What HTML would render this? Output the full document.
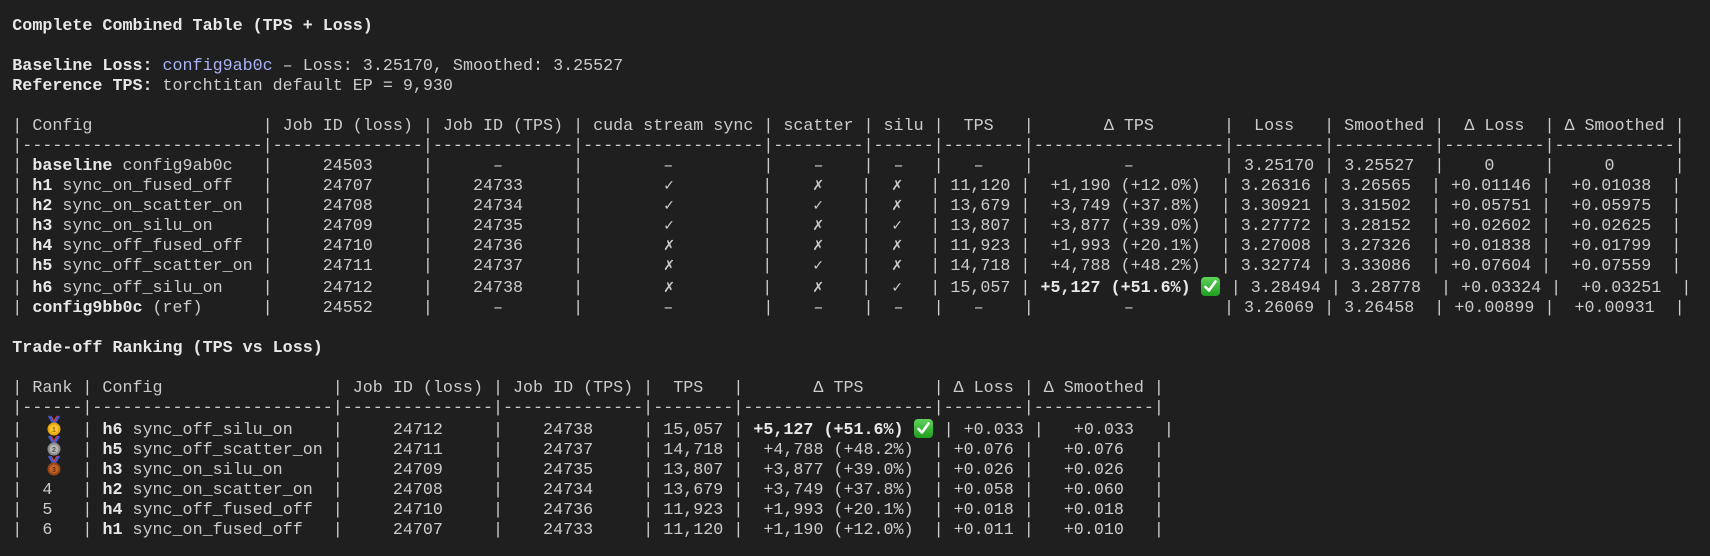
<!DOCTYPE html>
<html><head><meta charset="utf-8">
<style>
html,body{margin:0;padding:0;background:#1f1f1f;}
body{width:1710px;height:556px;overflow:hidden;position:relative;}
pre{margin:0;position:absolute;left:12.3px;top:16.7px;font-family:"Liberation Mono","DejaVu Sans Mono",monospace;font-size:16.7px;line-height:20px;color:#cccccc;white-space:pre;}
b{font-weight:bold;color:#e8e8e8;}
.l{color:#a9b3f5;}
i{font-style:normal;display:inline-block;width:1ch;text-align:center;font-family:"DejaVu Sans",sans-serif;font-size:14px;line-height:1;}
.ok{display:inline-block;width:2ch;height:20px;vertical-align:-5px;position:relative;}
.ok span{position:absolute;left:0;top:0;width:19px;height:19px;border-radius:4px;background:linear-gradient(#5fd35a,#1f9e1f);}
.ok svg{position:absolute;left:2px;top:2px;}
.m{position:absolute;}
</style></head><body>
<pre><b>Complete Combined Table (TPS + Loss)</b>

<b>Baseline Loss:</b> <span class="l">config9ab0c</span> – Loss: 3.25170, Smoothed: 3.25527
<b>Reference TPS:</b> torchtitan default EP = 9,930

| Config                 | Job ID (loss) | Job ID (TPS) | cuda stream sync | scatter | silu |  TPS   |       Δ TPS       |  Loss   | Smoothed |  Δ Loss  | Δ Smoothed |
|------------------------|---------------|--------------|------------------|---------|------|--------|-------------------|---------|----------|----------|------------|
| <b>baseline</b> config9ab0c   |     24503     |      –       |        –         |    –    |  –   |   –    |         –         | 3.25170 | 3.25527  |    0     |     0      |
| <b>h1</b> sync_on_fused_off   |     24707     |    24733     |        <i>✓</i>         |    <i>✗</i>    |  <i>✗</i>   | 11,120 |  +1,190 (+12.0%)  | 3.26316 | 3.26565  | +0.01146 |  +0.01038  |
| <b>h2</b> sync_on_scatter_on  |     24708     |    24734     |        <i>✓</i>         |    <i>✓</i>    |  <i>✗</i>   | 13,679 |  +3,749 (+37.8%)  | 3.30921 | 3.31502  | +0.05751 |  +0.05975  |
| <b>h3</b> sync_on_silu_on     |     24709     |    24735     |        <i>✓</i>         |    <i>✗</i>    |  <i>✓</i>   | 13,807 |  +3,877 (+39.0%)  | 3.27772 | 3.28152  | +0.02602 |  +0.02625  |
| <b>h4</b> sync_off_fused_off  |     24710     |    24736     |        <i>✗</i>         |    <i>✗</i>    |  <i>✗</i>   | 11,923 |  +1,993 (+20.1%)  | 3.27008 | 3.27326  | +0.01838 |  +0.01799  |
| <b>h5</b> sync_off_scatter_on |     24711     |    24737     |        <i>✗</i>         |    <i>✓</i>    |  <i>✗</i>   | 14,718 |  +4,788 (+48.2%)  | 3.32774 | 3.33086  | +0.07604 |  +0.07559  |
| <b>h6</b> sync_off_silu_on    |     24712     |    24738     |        <i>✗</i>         |    <i>✗</i>    |  <i>✓</i>   | 15,057 | <b>+5,127 (+51.6%)</b> <span class="ok"><span></span><svg width="15" height="15" viewBox="0 0 15 15"><path d="M2.5 8 L6 11.5 L12.5 2.5" stroke="#fff" stroke-width="2.6" fill="none" stroke-linecap="round" stroke-linejoin="round"/></svg></span> | 3.28494 | 3.28778  | +0.03324 |  +0.03251  |
| <b>config9bb0c</b> (ref)      |     24552     |      –       |        –         |    –    |  –   |   –    |         –         | 3.26069 | 3.26458  | +0.00899 |  +0.00931  |

<b>Trade-off Ranking (TPS vs Loss)</b>

| Rank | Config                 | Job ID (loss) | Job ID (TPS) |  TPS   |       Δ TPS       | Δ Loss | Δ Smoothed |
|------|------------------------|---------------|--------------|--------|-------------------|--------|------------|
|      | <b>h6</b> sync_off_silu_on    |     24712     |    24738     | 15,057 | <b>+5,127 (+51.6%)</b> <span class="ok"><span></span><svg width="15" height="15" viewBox="0 0 15 15"><path d="M2.5 8 L6 11.5 L12.5 2.5" stroke="#fff" stroke-width="2.6" fill="none" stroke-linecap="round" stroke-linejoin="round"/></svg></span> | +0.033 |   +0.033   |
|      | <b>h5</b> sync_off_scatter_on |     24711     |    24737     | 14,718 |  +4,788 (+48.2%)  | +0.076 |   +0.076   |
|      | <b>h3</b> sync_on_silu_on     |     24709     |    24735     | 13,807 |  +3,877 (+39.0%)  | +0.026 |   +0.026   |
|  4   | <b>h2</b> sync_on_scatter_on  |     24708     |    24734     | 13,679 |  +3,749 (+37.8%)  | +0.058 |   +0.060   |
|  5   | <b>h4</b> sync_off_fused_off  |     24710     |    24736     | 11,923 |  +1,993 (+20.1%)  | +0.018 |   +0.018   |
|  6   | <b>h1</b> sync_on_fused_off   |     24707     |    24733     | 11,120 |  +1,190 (+12.0%)  | +0.011 |   +0.010   |</pre>

<svg class="m" style="left:46px;top:415px" width="16" height="22" viewBox="0 0 16 22">
<path d="M3 1 L8 9 L13 1" stroke="#3b5bd6" stroke-width="2.5" fill="none"/><path d="M5 1 L8 6 L11 1" stroke="#d83a3a" stroke-width="1.2" fill="none"/>
<circle cx="8" cy="14" r="6.5" fill="#e9a80c"/><circle cx="8" cy="14" r="4.5" fill="#f7c531"/><text x="8" y="17" font-size="7" text-anchor="middle" fill="#a86a00" font-family="Liberation Sans,sans-serif" font-weight="bold">1</text></svg>
<svg class="m" style="left:46px;top:435px" width="16" height="22" viewBox="0 0 16 22">
<path d="M3 1 L8 9 L13 1" stroke="#3b5bd6" stroke-width="2.5" fill="none"/><path d="M5 1 L8 6 L11 1" stroke="#d83a3a" stroke-width="1.2" fill="none"/>
<circle cx="8" cy="14" r="6.5" fill="#8d8d8d"/><circle cx="8" cy="14" r="4.5" fill="#b5b5b5"/><text x="8" y="17" font-size="7" text-anchor="middle" fill="#555" font-family="Liberation Sans,sans-serif" font-weight="bold">2</text></svg>
<svg class="m" style="left:46px;top:455px" width="16" height="22" viewBox="0 0 16 22">
<path d="M3 1 L8 9 L13 1" stroke="#3b5bd6" stroke-width="2.5" fill="none"/><path d="M5 1 L8 6 L11 1" stroke="#d83a3a" stroke-width="1.2" fill="none"/>
<circle cx="8" cy="14" r="6.5" fill="#9a4516"/><circle cx="8" cy="14" r="4.5" fill="#c0662a"/><text x="8" y="17" font-size="7" text-anchor="middle" fill="#6a2a08" font-family="Liberation Sans,sans-serif" font-weight="bold">3</text></svg>
</body></html>
